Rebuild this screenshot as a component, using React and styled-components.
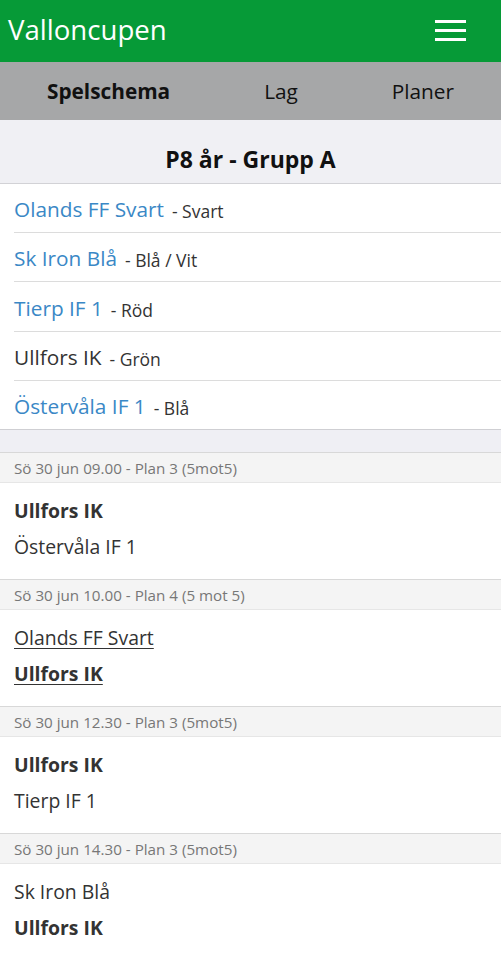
import React from 'react';
import styled, { createGlobalStyle } from 'styled-components';

const GlobalStyle = createGlobalStyle`
  body {
    margin: 0;
    background: #fff;
    font-family: "Open Sans", "Noto Sans", sans-serif;
    color: #333;
  }
`;

const Page = styled.div`
  width: 501px;
  min-height: 960px;
  background: #fff;
`;

const TopBar = styled.header`
  height: 62px;
  background: #069a37;
  display: flex;
  align-items: center;
  justify-content: space-between;
  padding: 0 35px 0 8px;
  box-sizing: border-box;
`;

const Brand = styled.div`
  color: #fff;
  font-size: 27.6px;
  line-height: 1;
  margin-top: -3px;
`;

const Burger = styled.button`
  background: none;
  border: 0;
  padding: 0;
  width: 31px;
  display: flex;
  flex-direction: column;
  gap: 6px;
  margin-top: -2px;
  span {
    display: block;
    height: 3px;
    background: #fff;
  }
`;

const Tabs = styled.nav`
  height: 58px;
  background: #a6a7a8;
  display: flex;
  align-items: center;
  justify-content: space-around;
`;

const Tab = styled.a`
  font-size: 20.8px;
  color: #111;
  font-weight: ${p => (p.active ? 700 : 400)};
  text-decoration: none;
  margin-top: -1px;
`;

const GroupTitle = styled.h1`
  margin: 0;
  background: #f0f0f4;
  border-bottom: 1px solid #d2d2d6;
  display: flex;
  align-items: center;
  justify-content: center;
  padding-top: 14px;
  height: 49px;
  font-size: 23px;
  font-weight: 700;
  color: #111;
`;

const TeamList = styled.ul`
  list-style: none;
  margin: 0;
  padding: 0 0 0 14px;
  border-bottom: 1px solid #cfcfd3;
`;

const TeamRow = styled.li`
  display: flex;
  align-items: center;
  padding-top: 2px;
  box-sizing: border-box;
  height: 48px;
  &:not(:last-child) {
    border-bottom: 1px solid #dcdcdc;
    height: 49px;
  }
  &:nth-child(3) {
    height: 50px;
  }
`;

const TeamName = styled.span`
  font-size: 20.8px;
  color: ${p => (p.link ? '#3a88c6' : '#333')};
`;

const TeamColor = styled.span`
  font-size: 17.5px;
  color: #333;
  margin-left: 8px;
  margin-top: 4px;
`;

const Spacer = styled.div`
  height: 22px;
  background: #efeff4;
`;

const MatchHead = styled.div`
  height: 29px;
  background: #f4f4f4;
  border-top: 1px solid #d8d8d8;
  border-bottom: 1px solid #e6e6e6;
  display: flex;
  align-items: center;
  padding-left: 14px;
  font-size: 15.2px;
  color: #777;
`;

const MatchBody = styled.div`
  padding: 10px 14px 14px;
`;

const Side = styled.div`
  font-size: 19.4px;
  line-height: 36px;
  color: #333;
  font-weight: ${p => (p.winner ? 700 : 400)};
  text-decoration: ${p => (p.underline ? 'underline' : 'none')};
  text-underline-offset: 3px;
`;

const teams = [
  { name: 'Olands FF Svart', color: 'Svart', link: true },
  { name: 'Sk Iron Blå', color: 'Blå / Vit', link: true },
  { name: 'Tierp IF 1', color: 'Röd', link: true },
  { name: 'Ullfors IK', color: 'Grön', link: false },
  { name: 'Östervåla IF 1', color: 'Blå', link: true }
];

const matches = [
  {
    info: 'Sö 30 jun 09.00 - Plan 3 (5mot5)',
    sides: [{ name: 'Ullfors IK', winner: true }, { name: 'Östervåla IF 1' }]
  },
  {
    info: 'Sö 30 jun 10.00 - Plan 4 (5 mot 5)',
    sides: [
      { name: 'Olands FF Svart', underline: true },
      { name: 'Ullfors IK', winner: true, underline: true }
    ]
  },
  {
    info: 'Sö 30 jun 12.30 - Plan 3 (5mot5)',
    sides: [{ name: 'Ullfors IK', winner: true }, { name: 'Tierp IF 1' }]
  },
  {
    info: 'Sö 30 jun 14.30 - Plan 3 (5mot5)',
    sides: [{ name: 'Sk Iron Blå' }, { name: 'Ullfors IK', winner: true }]
  }
];

const App = () => (
  <Page>
    <GlobalStyle />
    <TopBar>
      <Brand>Valloncupen</Brand>
      <Burger aria-label="Meny">
        <span />
        <span />
        <span />
      </Burger>
    </TopBar>
    <Tabs>
      <Tab active>Spelschema</Tab>
      <Tab>Lag</Tab>
      <Tab>Planer</Tab>
    </Tabs>
    <GroupTitle>P8 år - Grupp A</GroupTitle>
    <TeamList>
      {teams.map(t => (
        <TeamRow key={t.name}>
          <TeamName link={t.link}>{t.name}</TeamName>
          <TeamColor>- {t.color}</TeamColor>
        </TeamRow>
      ))}
    </TeamList>
    <Spacer />
    {matches.map(m => (
      <section key={m.info}>
        <MatchHead>{m.info}</MatchHead>
        <MatchBody>
          {m.sides.map(s => (
            <Side key={s.name} winner={s.winner} underline={s.underline}>
              {s.name}
            </Side>
          ))}
        </MatchBody>
      </section>
    ))}
  </Page>
);

export default App;
